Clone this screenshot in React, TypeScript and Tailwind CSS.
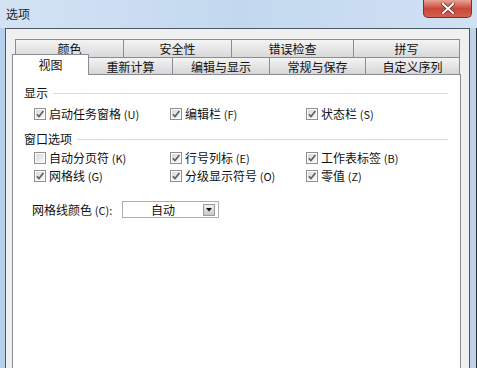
import React from "react";

const cjk = { fontFamily: "'Noto Sans CJK SC', 'Noto Sans', sans-serif" };

function Check({ checked }: { checked: boolean }) {
  return (
    <svg width="12" height="12" viewBox="0 0 12 12" className="shrink-0">
      <defs>
        <linearGradient id="cbg" x1="0" y1="0" x2="1" y2="1">
          <stop offset="0" stopColor="#d9d9d9" />
          <stop offset="1" stopColor="#f7f7f7" />
        </linearGradient>
      </defs>
      <rect x="0.5" y="0.5" width="11" height="11" fill="#ffffff" stroke="#8f8f8f" />
      <rect x="2" y="2" width="8" height="8" fill="url(#cbg)" />
      {checked && (
        <path d="M2.8 6.2 L5 8.6 L9.4 3" fill="none" stroke="#55606c" strokeWidth="1.6" />
      )}
    </svg>
  );
}

function Item({ label, k, checked }: { label: string; k: string; checked: boolean }) {
  return (
    <div className="flex items-center gap-[3px] h-full">
      <Check checked={checked} />
      <span className="text-[12px] leading-none text-[#111111] whitespace-nowrap" style={cjk}>
        {label} <span className="text-[11px]">({k})</span>
      </span>
    </div>
  );
}

function Header({ text }: { text: string }) {
  return (
    <div className="flex items-center h-[16px]">
      <span className="text-[12px] leading-none text-[#111111] whitespace-nowrap" style={cjk}>
        {text}
      </span>
      <div className="flex-1 h-px bg-[#d5dde3] ml-[5px]" />
    </div>
  );
}

export default function App() {
  const backTabs = [
    { t: "颜色", w: "w-[108px]" },
    { t: "安全性", w: "w-[108px]" },
    { t: "错误检查", w: "w-[122px]" },
    { t: "拼写", w: "w-[107px]" },
  ];
  const frontTabs = [
    { t: "重新计算", w: "w-[84px]" },
    { t: "编辑与显示", w: "w-[97px]" },
    { t: "常规与保存", w: "w-[96px]" },
    { t: "自定义序列", w: "w-[94px]" },
  ];
  return (
    <div className="w-[477px] h-[368px] overflow-hidden flex flex-col bg-gradient-to-r from-[#c2d7ee] via-[#cddff2] to-[#bcd2ea]">
      {/* title bar */}
      <div className="h-[28px] flex items-start justify-between shrink-0 bg-gradient-to-r from-[#d3e3f4] via-[#c3d8ef] to-[#d0e1f3]">
        <span className="pl-[6px] pt-[8px] text-[12px] leading-none text-[#1e1e1e]" style={cjk}>
          选项
        </span>
        <div className="mr-[5px] w-[49px] h-[18px] rounded-b-[5px] border border-t-0 border-[#7a2f28] bg-gradient-to-b from-[#e6a394] via-[#c9473a] to-[#d2604f] flex items-center justify-center">
          <svg width="14" height="11" viewBox="0 0 14 11">
            <path d="M2 1 L12 10 M12 1 L2 10" stroke="#5a1d18" strokeWidth="3.4" strokeLinecap="round" />
            <path d="M2 1 L12 10 M12 1 L2 10" stroke="#ffffff" strokeWidth="2.2" strokeLinecap="round" />
          </svg>
        </div>
      </div>
      {/* body */}
      <div className="flex flex-1 min-h-0">
        <div className="w-[5px] bg-[#b6cfea]" />
        <div className="w-[465px] border-l border-t border-r border-[#4a5866] bg-[#f0f0f0] pl-[6px] pr-[8px] pt-[10px] flex flex-col">
          {/* back tab row */}
          <div className="flex ml-[3px] h-[18px]">
            {backTabs.map((b, i) => (
              <div
                key={b.t}
                className={`${b.w} border-t border-l ${i === backTabs.length - 1 ? "border-r" : ""} border-[#898c95] bg-gradient-to-b from-[#f4f4f4] to-[#d9d9d9] flex justify-center pt-[3px] text-[12px] leading-none text-[#111111]`}
                style={cjk}
              >
                {b.t}
              </div>
            ))}
          </div>
          {/* front tab row */}
          <div className="flex items-end h-[17px]">
            <div
              className="w-[77px] h-[21px] mb-[-1px] relative z-10 border-l border-t border-r border-[#898c95] bg-white flex justify-center pt-[4px] text-[12px] leading-none text-[#111111]"
              style={cjk}
            >
              视图
            </div>
            {frontTabs.map((f) => (
              <div
                key={f.t}
                className={`${f.w} h-[17px] border-t border-r border-[#898c95] bg-gradient-to-b from-[#f4f4f4] to-[#d6d6d6] flex justify-center pt-[3px] text-[12px] leading-none text-[#111111]`}
                style={cjk}
              >
                {f.t}
              </div>
            ))}
          </div>
          {/* panel */}
          <div className="flex-1 border-l border-t border-r border-[#898c95] bg-white pl-[11px] pr-[12px]">
            <div className="mt-[10px]">
              <Header text="显示" />
            </div>
            <div className="grid grid-cols-[136px_136px_1fr] pl-[10px] h-[18px] mt-[4px]">
              <Item label="启动任务窗格" k="U" checked />
              <Item label="编辑栏" k="F" checked />
              <Item label="状态栏" k="S" checked />
            </div>
            <div className="mt-[8px]">
              <Header text="窗口选项" />
            </div>
            <div className="grid grid-cols-[136px_136px_1fr] pl-[10px] h-[18px] mt-[2px]">
              <Item label="自动分页符" k="K" checked={false} />
              <Item label="行号列标" k="E" checked />
              <Item label="工作表标签" k="B" checked />
            </div>
            <div className="grid grid-cols-[136px_136px_1fr] pl-[10px] h-[18px]">
              <Item label="网格线" k="G" checked />
              <Item label="分级显示符号" k="O" checked />
              <Item label="零值" k="Z" checked />
            </div>
            <div className="flex items-center pl-[8px] mt-[16px] h-[17px]">
              <span className="w-[90px] text-[12px] leading-none text-[#111111] whitespace-nowrap" style={cjk}>
                网格线颜色 <span className="text-[11px]">(C):</span>
              </span>
              <div className="w-[97px] h-[17px] border border-[#abadb3] bg-white flex items-center pr-[3px]">
                <span className="flex-1 text-center text-[12px] leading-none text-[#111111]" style={cjk}>
                  自动
                </span>
                <div className="w-[12px] h-[12px] border border-[#9a9a9a] bg-gradient-to-b from-[#f2f2f2] to-[#c8c8c8] flex items-center justify-center">
                  <svg width="6" height="4" viewBox="0 0 6 4">
                    <path d="M0 0 H6 L3 3.5 Z" fill="#111" />
                  </svg>
                </div>
              </div>
            </div>
          </div>
        </div>
        <div className="w-[6px] bg-[#c0d3e6]" />
        <div className="w-[1px] bg-[#26313d]" />
      </div>
    </div>
  );
}
